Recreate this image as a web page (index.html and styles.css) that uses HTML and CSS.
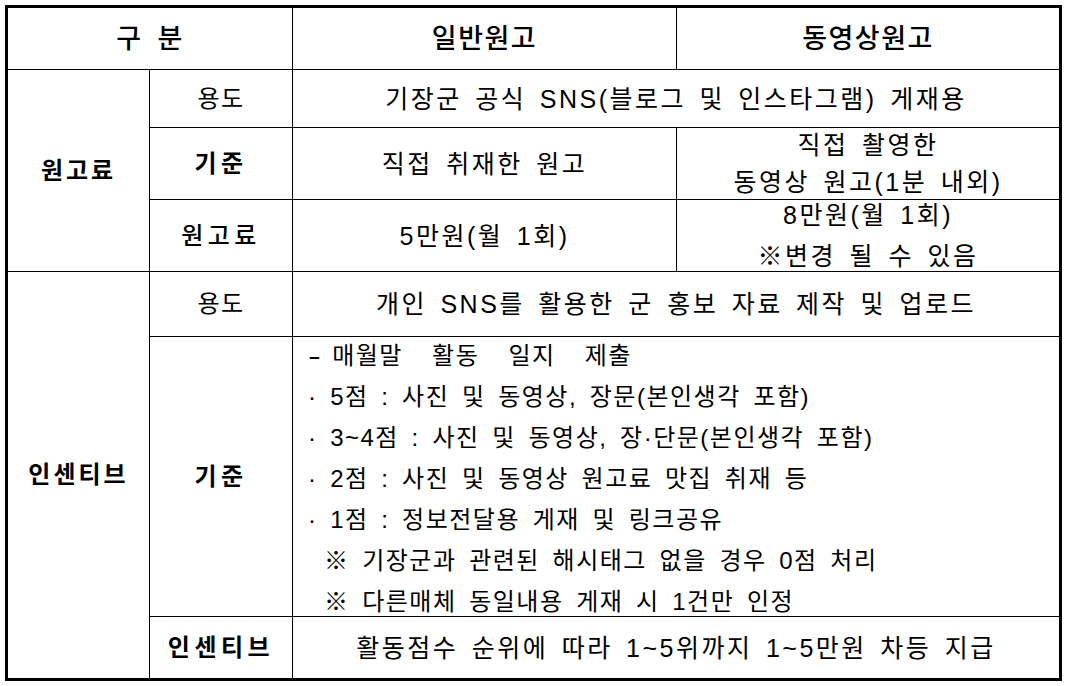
FILE: index.html
```html
<!DOCTYPE html>
<html lang="ko">
<head>
<meta charset="utf-8">
<title>원고료 및 인센티브</title>
<link rel="stylesheet" href="styles.css">
</head>
<body>
<div class="sheet">
  <div class="cell head c12">구 분</div>
  <div class="cell head">일반원고</div>
  <div class="cell head">동영상원고</div>

  <div class="cell group r2">원고료</div>
  <div class="cell label">용도</div>
  <div class="cell body c34">기장군 공식 SNS(블로그 및 인스타그램) 게재용</div>

  <div class="cell label strong">기준</div>
  <div class="cell body">직접 취재한 원고</div>
  <div class="cell body two lh37"><span>직접 촬영한</span><span>동영상 원고(1분 내외)</span></div>

  <div class="cell label medium">원고료</div>
  <div class="cell body">5만원(월 1회)</div>
  <div class="cell body two lh41"><span>8만원(월 1회)</span><span>※변경 될 수 있음</span></div>

  <div class="cell group r5">인센티브</div>
  <div class="cell label">용도</div>
  <div class="cell body c34">개인 SNS를 활용한 군 홍보 자료 제작 및 업로드</div>

  <div class="cell label strong">기준</div>
  <div class="cell c34 list">
    <p class="item"><span class="dash">-</span> <span class="wide">매월말 활동 일지 제출</span></p>
    <p class="item">· 5점 : 사진 및 동영상, 장문(본인생각 포함)</p>
    <p class="item">· 3~4점 : 사진 및 동영상, 장·단문(본인생각 포함)</p>
    <p class="item">· 2점 : 사진 및 동영상 원고료 맛집 취재 등</p>
    <p class="item">· 1점 : 정보전달용 게재 및 링크공유</p>
    <p class="item note">※ 기장군과 관련된 해시태그 없을 경우 0점 처리</p>
    <p class="item note">※ 다른매체 동일내용 게재 시 1건만 인정</p>
  </div>

  <div class="cell label strong">인센티브</div>
  <div class="cell body c34">활동점수 순위에 따라 1~5위까지 1~5만원 차등 지급</div>
</div>
</body>
</html>
```

FILE: styles.css
```css
html, body {
  margin: 0;
  padding: 0;
  background: #ffffff;
}

body {
  font-family: "Liberation Sans", "Noto Sans CJK KR", sans-serif;
  color: #000000;
}

.sheet {
  margin: 5px;
  width: max-content;
  display: grid;
  grid-template-columns: 141px 142px 383px 382px;
  grid-template-rows: 61px 57px 71px 71px 64px 279px 61px;
  gap: 1px;
  background: #000000;
  border: 3px solid #000000;
}

.cell {
  background: #ffffff;
  display: flex;
  flex-direction: column;
  align-items: center;
  justify-content: center;
  text-align: center;
  font-size: 24px;
  letter-spacing: 1.5px;
  word-spacing: 6px;
  line-height: 30px;
  white-space: nowrap;
  overflow: visible;
}

.body {
  font-size: 25px;
  letter-spacing: 2.5px;
  word-spacing: 4px;
}

.head {
  font-size: 27px;
  letter-spacing: 1.5px;
  font-weight: 500;
}

.c12 {
  grid-column: 1 / span 2;
  word-spacing: 6px;
}

.c34 {
  grid-column: 3 / span 2;
}

.group {
  grid-column: 1;
  font-weight: 700;
  letter-spacing: 3px;
}

.r2 {
  grid-row: 2 / span 3;
}

.r5 {
  grid-row: 5 / span 3;
}

.label {
  grid-column: 2;
}

.strong {
  font-weight: 700;
  letter-spacing: 4.5px;
}

.medium {
  font-weight: 500;
  letter-spacing: 4.5px;
}

.two span {
  display: block;
}

.lh37 {
  line-height: 37px;
}

.lh41 {
  line-height: 41px;
}

.list {
  align-items: flex-start;
  justify-content: flex-start;
  text-align: left;
  padding-left: 15px;
  word-spacing: 4.5px;
}

.item {
  margin: 0;
  line-height: 41px;
}

.item:first-child {
  margin-top: -2px;
}

.dash {
  display: inline-block;
  transform: scaleX(1.6);
  transform-origin: left center;
  margin-right: 2px;
}

.wide {
  word-spacing: 21px;
}

.note {
  padding-left: 16px;
}
```
